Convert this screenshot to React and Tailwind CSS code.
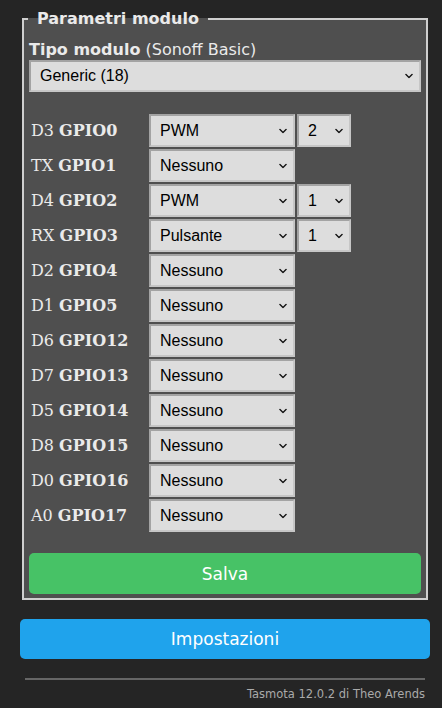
import React from "react";

const rows = [
  { pin: "D3", gpio: "GPIO0", value: "PWM", index: "2" },
  { pin: "TX", gpio: "GPIO1", value: "Nessuno" },
  { pin: "D4", gpio: "GPIO2", value: "PWM", index: "1" },
  { pin: "RX", gpio: "GPIO3", value: "Pulsante", index: "1" },
  { pin: "D2", gpio: "GPIO4", value: "Nessuno" },
  { pin: "D1", gpio: "GPIO5", value: "Nessuno" },
  { pin: "D6", gpio: "GPIO12", value: "Nessuno" },
  { pin: "D7", gpio: "GPIO13", value: "Nessuno" },
  { pin: "D5", gpio: "GPIO14", value: "Nessuno" },
  { pin: "D8", gpio: "GPIO15", value: "Nessuno" },
  { pin: "D0", gpio: "GPIO16", value: "Nessuno" },
  { pin: "A0", gpio: "GPIO17", value: "Nessuno" },
];

const Chevron = () => (
  <svg
    className="pointer-events-none absolute right-[8px] top-1/2 -translate-y-1/2"
    width="8"
    height="5"
    viewBox="0 0 8 5"
  >
    <polyline points="0.5,0.5 4,4 7.5,0.5" fill="none" stroke="#111" strokeWidth="1.3" />
  </svg>
);

const Select = ({ value, options, className }) => (
  <div className={`relative ${className}`}>
    <select
      defaultValue={value}
      className="h-full w-full appearance-none rounded-none border-2 border-t-[#a3a3a3] border-l-[#a3a3a3] border-b-[#c6c6c6] border-r-[#c6c6c6] bg-[#dddddd] pl-[9px] text-[16px] text-black outline-none [font-family:'Liberation_Sans',Arial,sans-serif]"
    >
      {options.map((o) => (
        <option key={o} value={o}>
          {o}
        </option>
      ))}
    </select>
    <Chevron />
  </div>
);

const gpioOptions = ["Nessuno", "Utente", "Pulsante", "Relè", "PWM", "Led"];

export default function App() {
  return (
    <div className="min-h-screen bg-[#252525] pl-[20px] pr-[12px] pt-[9px] text-[#eaeaea] [font-family:'DejaVu_Sans',Verdana,sans-serif]">
      <fieldset className="mx-[2px] border-2 border-[#cfcfcf] bg-[#4f4f4f] px-[5px] pb-[4px]">
        <legend className="ml-[-1px] px-[9px] text-[16px] font-bold leading-[19px]">Parametri modulo</legend>

        <div className="mt-[12px] text-[16px] leading-[20px]">
          <b>Tipo modulo</b> (Sonoff Basic)
        </div>
        <Select
          value="Generic (18)"
          options={["Sonoff Basic (1)", "Generic (18)"]}
          className="h-[32px] w-full"
        />

        <div className="mt-[22px] flex flex-col gap-[2px]">
          {rows.map((r) => (
            <div key={r.gpio} className="flex h-[33px] items-center">
              <div className="w-[120px] pl-[2px] text-[16px] [font-family:'DejaVu_Serif',Georgia,serif]">
                {r.pin} <b>{r.gpio}</b>
              </div>
              <Select value={r.value} options={gpioOptions} className="h-full w-[146px]" />
              {r.index && (
                <Select
                  value={r.index}
                  options={["1", "2", "3", "4", "5", "6", "7", "8"]}
                  className="ml-[2px] h-full w-[54px]"
                />
              )}
            </div>
          ))}
        </div>

        <button className="mt-[21px] h-[41px] w-full rounded-[5px] bg-[#47c266] pt-[2px] text-[17px] text-white">
          Salva
        </button>
      </fieldset>

      <button className="mt-[19px] h-[40px] w-full rounded-[5px] bg-[#1fa3ec] pt-[2px] text-[17px] text-white">
        Impostazioni
      </button>

      <div className="mx-[5px] mt-[19px] border-t-2 border-[#666]" />
      <div className="mx-[5px] mt-[6px] text-right text-[11.5px] text-[#aaaaaa]">Tasmota 12.0.2 di Theo Arends</div>
    </div>
  );
}
